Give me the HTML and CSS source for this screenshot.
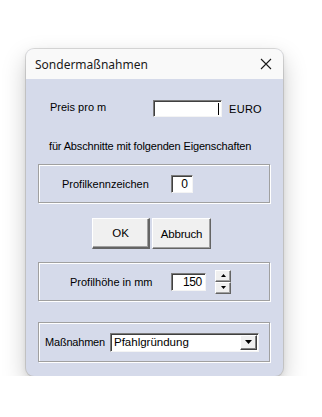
FILE: index.html
```html
<!DOCTYPE html>
<html>
<head>
<meta charset="utf-8">
<link rel="stylesheet" href="styles.css">
</head>
<body>
<div class="window">
  <div class="titlebar">
    <span class="title">Sondermaßnahmen</span>
    <svg class="close" width="12" height="12" viewBox="0 0 12 12"><path d="M1 1 L11 11 M11 1 L1 11" stroke="#1a1a1a" stroke-width="1.1" fill="none"/></svg>
  </div>
  <div class="content">
    <div class="row-preis">
      <span class="lbl-preis">Preis pro m</span>
      <div class="field field-preis"><span class="caret"></span></div>
      <span class="euro">EURO</span>
    </div>
    <div class="hint">für Abschnitte mit folgenden Eigenschaften</div>
    <div class="group group-kenn">
      <span class="lbl-kenn">Profilkennzeichen</span>
      <div class="field field-kenn">0</div>
    </div>
    <div class="buttons">
      <div class="btn btn-ok">OK</div>
      <div class="btn btn-cancel">Abbruch</div>
    </div>
    <div class="group group-hoehe">
      <span class="lbl-hoehe">Profilhöhe in mm</span>
      <div class="field field-hoehe">150</div>
      <div class="spinner">
        <div class="spin"><svg width="5" height="3" viewBox="0 0 5 3"><path d="M2.5 0 L5 3 L0 3 Z" fill="#000"/></svg></div>
        <div class="spin"><svg width="5" height="3" viewBox="0 0 5 3"><path d="M0 0 L5 0 L2.5 3 Z" fill="#000"/></svg></div>
      </div>
    </div>
    <div class="group group-mass">
      <span class="lbl-mass">Maßnahmen</span>
      <div class="combo">
        <span class="combo-text">Pfahlgründung</span>
        <div class="combo-btn"><svg width="7" height="4" viewBox="0 0 7 4"><path d="M0 0 L7 0 L3.5 4 Z" fill="#000"/></svg></div>
      </div>
    </div>
  </div>
</div>
</body>
</html>
```
FILE: styles.css
```css
html, body {
  margin: 0;
  padding: 0;
  background: #ffffff;
}
body {
  padding: 49px 0 0 26px;
  font-family: "Liberation Sans", Arial, sans-serif;
  font-size: 11px;
  color: #000;
}
.window {
  width: 257px;
  height: 327px;
  border-radius: 8px;
  overflow: hidden;
  background: #d5daea;
  box-shadow: 0 0 0 1px rgba(0,0,0,0.12), 0 10px 24px rgba(0,0,0,0.22), 0 2px 6px rgba(0,0,0,0.08);
  display: flex;
  flex-direction: column;
}
.titlebar {
  height: 30px;
  background: #f9f9f9;
  display: flex;
  align-items: center;
  justify-content: space-between;
  padding: 0 10px 0 9px;
  flex: none;
}
.title {
  font-family: "Noto Sans", "Open Sans", sans-serif;
  font-size: 12px;
  color: #1a1a1a;
  margin-top: 1px;
}
.close {
  margin-right: 1px;
}
.content {
  padding: 0 13px 0 12px;
  display: flex;
  flex-direction: column;
}
.row-preis {
  display: flex;
  align-items: center;
  margin-top: 21px;
  height: 17px;
  padding-left: 12px;
}
.lbl-preis {
  width: 103px;
  margin-top: -4px;
}
.field {
  background: #fff;
  border-top: 1px solid #7a7a7a;
  border-left: 1px solid #7a7a7a;
  border-right: 1px solid #f4f4f4;
  border-bottom: 1px solid #f4f4f4;
  box-shadow: inset 1px 1px 0 #404040;
  box-sizing: border-box;
}
.field-preis {
  width: 69px;
  height: 17px;
  position: relative;
}
.caret {
  position: absolute;
  right: 2px;
  top: 2px;
  width: 1px;
  height: 12px;
  background: #000;
}
.euro {
  margin-left: 7px;
  letter-spacing: 0.3px;
}
.hint {
  margin-top: 22px;
  padding-left: 11px;
  height: 14px;
  line-height: 14px;
  letter-spacing: -0.15px;
}
.group {
  border: 1px solid #a0a0a0;
  box-shadow: inset 1px 1px 0 #fff, 1px 1px 0 #fff;
  box-sizing: border-box;
  width: 232px;
  display: flex;
  align-items: center;
}
.group-kenn {
  margin-top: 11px;
  height: 39px;
  padding-left: 23px;
}
.lbl-kenn {
  width: 109px;
}
.field-kenn {
  width: 22px;
  height: 18px;
  text-align: right;
  padding-right: 4px;
  line-height: 16px;
  font-size: 12px;
}
.buttons {
  display: flex;
  gap: 2px;
  margin-top: 15px;
  padding-left: 54px;
}
.btn {
  height: 31px;
  background: #f0f0f0;
  box-sizing: border-box;
  border-top: 1px solid #fff;
  border-left: 1px solid #fff;
  border-right: 1px solid #646464;
  border-bottom: 1px solid #646464;
  box-shadow: inset -1px -1px 0 #a0a0a0;
  display: flex;
  align-items: center;
  justify-content: center;
  font-size: 11.5px;
}
.btn-ok {
  width: 58px;
  border-right-width: 2px;
  border-bottom-width: 2px;
}
.btn-cancel {
  width: 59px;
  letter-spacing: -0.2px;
}
.group-hoehe {
  margin-top: 13px;
  height: 39px;
  padding-left: 31px;
}
.lbl-hoehe {
  width: 101px;
}
.field-hoehe {
  width: 35px;
  height: 18px;
  text-align: right;
  padding-right: 3px;
  line-height: 16px;
  font-size: 12px;
  letter-spacing: -0.3px;
}
.spinner {
  margin-left: 9px;
  display: flex;
  flex-direction: column;
}
.spin {
  width: 16px;
  height: 12px;
  box-sizing: border-box;
  background: #f0f0f0;
  border-top: 1px solid #fff;
  border-left: 1px solid #fff;
  border-right: 1px solid #646464;
  border-bottom: 1px solid #646464;
  box-shadow: inset -1px -1px 0 #a0a0a0;
  display: flex;
  align-items: center;
  justify-content: center;
}
.group-mass {
  margin-top: 21px;
  height: 40px;
  padding-left: 6px;
}
.lbl-mass {
  width: 65px;
  letter-spacing: -0.2px;
}
.combo {
  width: 149px;
  height: 19px;
  box-sizing: border-box;
  background: #fff;
  border-top: 1px solid #7a7a7a;
  border-left: 1px solid #7a7a7a;
  border-right: 1px solid #f4f4f4;
  border-bottom: 1px solid #f4f4f4;
  box-shadow: inset 1px 1px 0 #404040;
  display: flex;
  align-items: center;
  justify-content: space-between;
  padding: 1px 1px 1px 3px;
}
.combo-text {
  font-size: 11.5px;
}
.combo-btn {
  width: 17px;
  height: 15px;
  box-sizing: border-box;
  background: #f0f0f0;
  border-top: 1px solid #fff;
  border-left: 1px solid #fff;
  border-right: 1px solid #404040;
  border-bottom: 1px solid #404040;
  box-shadow: inset -1px -1px 0 #808080;
  display: flex;
  align-items: center;
  justify-content: center;
}
```
